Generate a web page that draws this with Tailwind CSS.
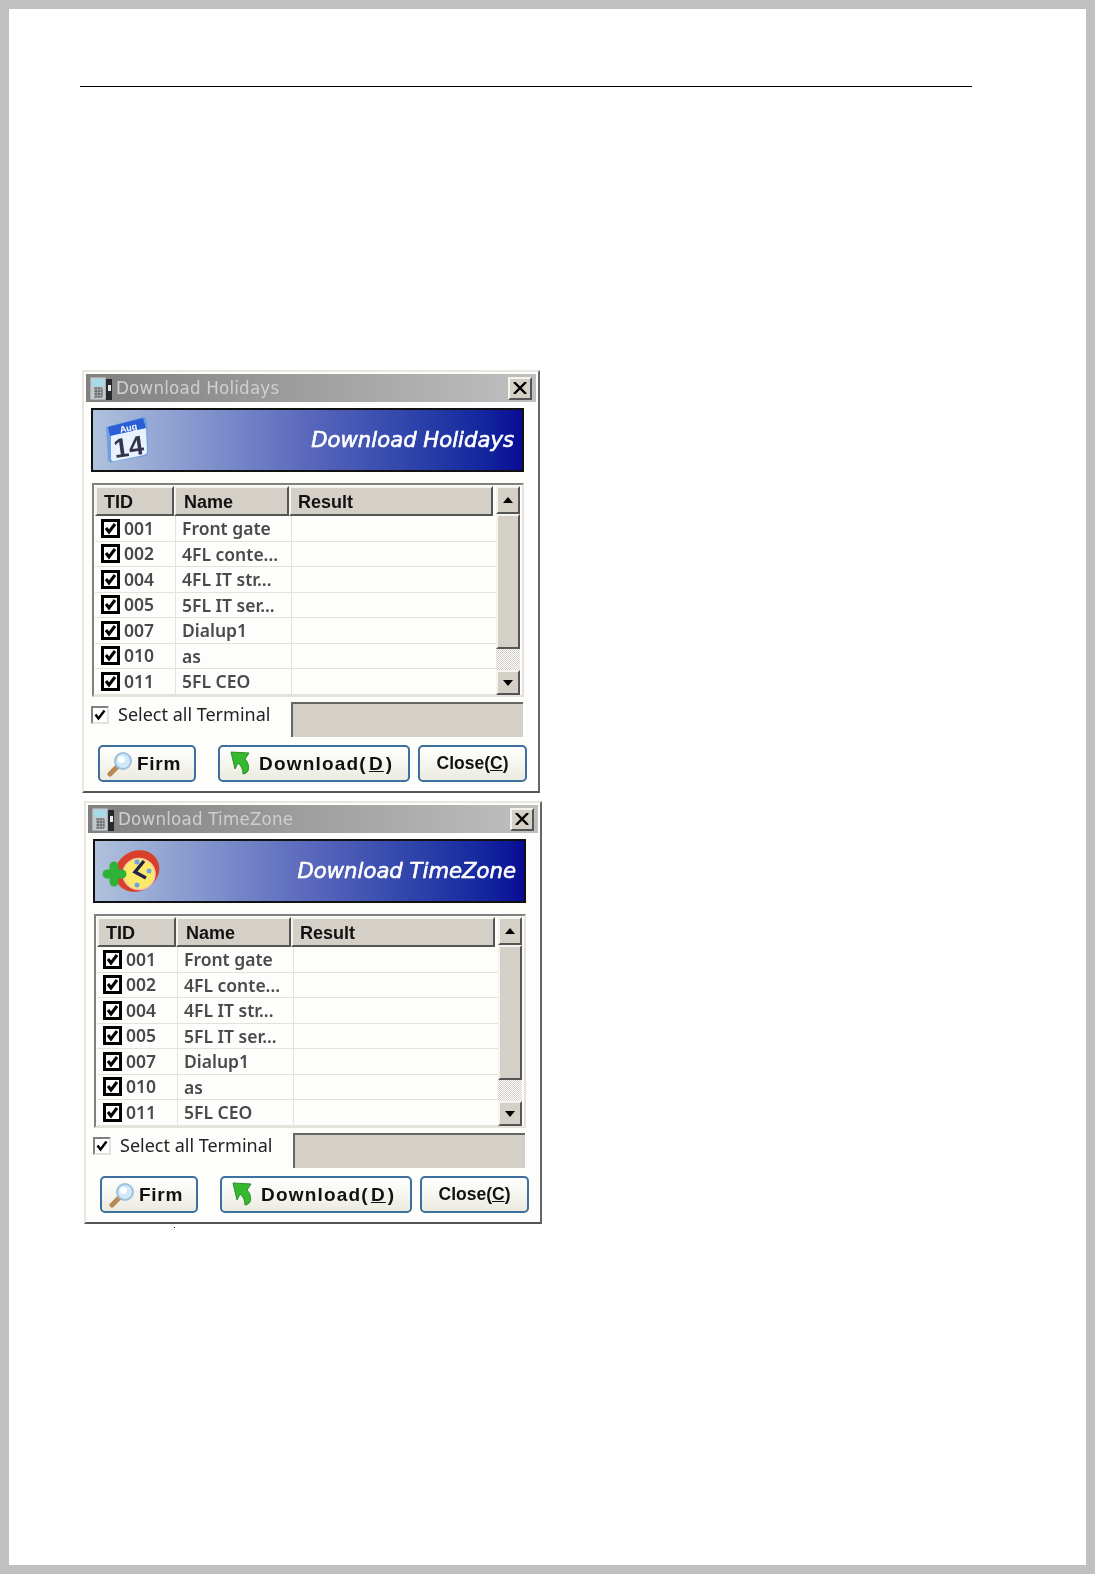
<!DOCTYPE html>
<html lang="en">
<head>
  <meta charset="UTF-8" />
  <title>Download dialogs</title>
  <script src="https://cdn.jsdelivr.net/npm/@tailwindcss/browser@4"></script>
</head>
<body class="bg-[#c0c0c0] p-[9px]">
  <div class="relative h-[1556px] w-[1077px] bg-white pt-[77px]">
    <div class="ml-[71px] h-px w-[892px] bg-black"></div>
    <div id="dialogs" class="pl-[73px] pt-[283px]"></div>
    <div class="absolute left-[165px] top-[1218px] h-px w-px bg-black"></div>
  </div>

  <script>
    const rows = [
      ['001', 'Front gate'], ['002', '4FL conte...'], ['004', '4FL IT str...'], ['005', '5FL IT ser...'],
      ['007', 'Dialup1'], ['010', 'as'], ['011', '5FL CEO'],
    ];

    const phoneIcon = `<svg class="h-[23px] w-[23px] shrink-0" viewBox="0 0 23 23">
      <rect x="0" y="0" width="16" height="23" fill="#c4c9cc" stroke="#8a9094"/>
      <rect x="2" y="2" width="12" height="7" fill="#a5dbe8"/>
      <path d="M4 11h8M4 14h8M4 17h8M4 20h8M6 11v9M9 11v9M12 11v9" stroke="#55595c"/>
      <rect x="16" y="2" width="6" height="21" fill="#26292b"/>
      <rect x="18" y="8" width="3" height="6" fill="#e6e8ea"/>
    </svg>`;

    const calendarIcon = `<svg class="h-[48px] w-[44px]" viewBox="0 0 44 48">
      <path d="M1 11 38 1q4 0 4 4l1 31q0 3-3 4L8 46q-5 1-5-3Z" fill="#6f9fe0"/>
      <path d="M6 19 41 12l1 24q0 2-3 3L10 45q-4 1-4-3Z" fill="#e8f2fc"/>
      <path d="M3 11 38 2l3 10L5 20Z" fill="#2a5fd6"/>
      <text x="24" y="15" transform="rotate(-12 24 15)" text-anchor="middle" font-family="Liberation Sans" font-weight="700" font-size="9" fill="#fff">Aug</text>
      <text x="25" y="40" transform="rotate(-8 25 40)" text-anchor="middle" font-family="Liberation Sans" font-weight="700" font-size="27" fill="#34344e">14</text>
    </svg>`;

    const clockIcon = `<svg class="h-[48px] w-[58px]" viewBox="0 0 58 48">
      <ellipse cx="35" cy="24" rx="23" ry="20" transform="rotate(-30 35 24)" fill="#d8402a"/>
      <ellipse cx="37" cy="27" rx="16" ry="15.500" fill="#fbe96a" stroke="#f6c8b0" stroke-width="1.5"/>
      <circle cx="35" cy="15" r="2.5" fill="#6fa4ea"/>
      <circle cx="47" cy="24" r="2.5" fill="#6fa4ea"/>
      <circle cx="35" cy="38" r="2.5" fill="#6fa4ea"/>
      <path d="M42 14 33 25l11 6" fill="none" stroke="#23234a" stroke-width="3.4"/>
      <path d="M12 19v16M5 27h15" stroke="#30b238" stroke-width="9" stroke-linecap="round"/>
    </svg>`;

    const lensIcon = `<svg class="h-[26px] w-[26px]" viewBox="0 0 26 26">
      <path d="M3 23 11 15" stroke="#b98a55" stroke-width="5" stroke-linecap="round"/>
      <circle cx="16" cy="10" r="8" fill="#cfe9fb" stroke="#9fc0dc" stroke-width="2"/>
      <circle cx="14.500" cy="8.500" r="3.500" fill="#fff"/>
    </svg>`;

    const arrowIcon = `<svg class="h-[25px] w-[20px]" viewBox="0 0 20 25">
      <path d="M1 1 19 2l-4 6q5 5 3 12-2 3-5 3 0-7-5-11l-3 6Z" fill="#35b92e" stroke="#2a8f2a"/>
    </svg>`;

    function dialog(title, icon, bannerPad, extra) {
      const body = rows.map(([tid, name]) => `
        <div class="flex h-[25.5px] shrink-0 border-b-[1.5px] border-[#e4e2da] text-[17.5px] font-semibold leading-[25px] text-[#4a4a4a] [font-family:'Noto_Sans',sans-serif]">
          <div class="flex w-[81px] items-center border-r-[1.5px] border-[#e4e2da] pl-[6px]">
            <span class="flex h-[19px] w-[19px] items-center justify-center border-[3px] border-black">
              <svg class="h-[13px] w-[13px]" viewBox="0 0 13 13"><path d="M2 6l3 4 6-8" fill="none" stroke="#000" stroke-width="3"/></svg>
            </span>
            <span class="ml-[4px]">${tid}</span>
          </div>
          <div class="w-[116px] whitespace-nowrap border-r-[1.5px] border-[#e4e2da] pl-[6px]">${name}</div>
          <div class="flex-1"></div>
        </div>`).join('');

      return `
      <div class="${extra} flex h-[423px] w-[458px] flex-col border-2 border-[#e8e6df] border-b-[#555] border-r-[#666] bg-[#fdfdfb] p-[2px] blur-[0.4px] [font-family:'Liberation_Sans',sans-serif]">
        <div class="flex h-[28px] items-center bg-gradient-to-r from-[#808080] to-[#c0c0c0] pl-[4px] pr-[4px]">
          ${phoneIcon}
          <span class="ml-[3px] flex-1 origin-left scale-x-[.93] text-[18px] leading-[24px] tracking-[.2px] text-[#cfcfcf] [font-family:'DejaVu_Sans',sans-serif]">${title}</span>
          <span class="flex h-[23px] w-[24px] items-center justify-center border-2 border-[#f4f3ee] border-b-[#555] border-r-[#555] bg-[#d4d0c8]">
            <svg class="h-[12px] w-[14px]" viewBox="0 0 14 12"><path d="M1 0l12 12M13 0 1 12" stroke="#000" stroke-width="2.4"/></svg>
          </span>
        </div>

        <div class="ml-[5px] mt-[6px] flex h-[64px] w-[433px] items-center justify-between border-2 border-[#111] bg-gradient-to-r from-[#b0c2dc] via-[#5a68bc] to-[#0a0a96] pr-[8px] ${bannerPad}">
          ${icon}
          <span class="text-[21.2px] italic text-white [-webkit-text-stroke:0.6px_white] [font-family:'DejaVu_Sans',sans-serif]">${title}</span>
        </div>

        <div class="ml-[6px] mt-[11px] flex h-[214px] w-[432px] flex-col overflow-hidden border-2 border-[#e4e2da] border-l-[#808080] border-t-[#808080] pl-px pt-px">
          <div class="flex flex-1">
            <div class="flex flex-1 flex-col">
              <div class="mr-[3px] flex h-[30px] shrink-0 text-[18px] font-bold leading-[28px] text-[#111]">
                <div class="w-[79px] border-2 border-[#f4f3ee] border-b-[#555] border-r-[#555] bg-[#d4d0c8] pl-[7px]">TID</div>
                <div class="w-[115px] border-2 border-[#f4f3ee] border-b-[#555] border-r-[#555] bg-[#d4d0c8] pl-[8px]">Name</div>
                <div class="flex-1 border-2 border-[#f4f3ee] border-b-[#555] border-r-[#555] bg-[#d4d0c8] pl-[7px]">Result</div>
              </div>
              ${body}
            </div>
            <div class="mr-[2px] flex w-[24px] flex-col">
              <div class="flex h-[28px] items-center justify-center border-2 border-[#f4f3ee] border-b-[#555] border-r-[#555] bg-[#d4d0c8]">
                <svg class="h-[6px] w-[10px]" viewBox="0 0 10 6"><path d="M5 0l5 6H0Z"/></svg>
              </div>
              <div class="h-[135px] border-2 border-[#f4f3ee] border-b-[#555] border-r-[#555] bg-[#d4d0c8]"></div>
              <div class="flex-1 bg-[repeating-conic-gradient(#d4d0c8_0_25%,#fff_0_50%)] bg-[length:2px_2px]"></div>
              <div class="flex h-[25px] items-center justify-center border-2 border-[#f4f3ee] border-b-[#555] border-r-[#555] bg-[#d4d0c8]">
                <svg class="h-[6px] w-[10px]" viewBox="0 0 10 6"><path d="M0 0h10L5 6Z"/></svg>
              </div>
            </div>
          </div>
        </div>

        <div class="ml-[5px] mt-[5px] flex h-[35px] items-start">
          <span class="mt-[4px] flex h-[18px] w-[18px] items-center justify-center border-2 border-[#808080] border-b-[#e4e2da] border-r-[#e4e2da] bg-white">
            <svg class="h-[12px] w-[12px]" viewBox="0 0 12 12"><path d="M1.5 5.5l3 4 6-8" fill="none" stroke="#000" stroke-width="2.4"/></svg>
          </span>
          <span class="ml-[9px] w-[173px] whitespace-nowrap text-[18px] leading-[24px] text-[#222] [font-family:'Noto_Sans',sans-serif]">Select all Terminal</span>
          <div class="h-[35px] w-[232px] border-l-2 border-t-2 border-[#666] bg-[#d4d0c8]"></div>
        </div>

        <div class="ml-[12px] mt-[8px] flex h-[37px] items-stretch text-[19px] font-bold text-[#111]">
          <div class="flex w-[98px] items-center rounded-[5px] border-2 border-[#3d6f9f] bg-gradient-to-b from-white to-[#ecebe0] pl-[7px]">
            ${lensIcon}<span class="ml-[4px] mt-[1px] tracking-[.7px]">Firm</span>
          </div>
          <div class="ml-[22px] flex w-[192px] items-center rounded-[5px] border-2 border-[#3d6f9f] bg-gradient-to-b from-white to-[#ecebe0] pl-[10px]">
            ${arrowIcon}<span class="ml-[9px] mt-[1px] tracking-[1.2px]">Download(<u class="mx-[2px]">D</u>)</span>
          </div>
          <div class="ml-[8px] flex w-[109px] items-center justify-center rounded-[5px] border-2 border-[#3d6f9f] bg-gradient-to-b from-white to-[#ecebe0] text-[17.5px]">
            <span>Close(<u>C</u>)</span>
          </div>
        </div>
      </div>`;
    }

    document.getElementById('dialogs').innerHTML =
      dialog('Download Holidays', calendarIcon, 'pl-[12px]', '') +
      dialog('Download TimeZone', clockIcon, 'pl-[7px]', 'ml-[2px] mt-[8px]');
  </script>
</body>
</html>
